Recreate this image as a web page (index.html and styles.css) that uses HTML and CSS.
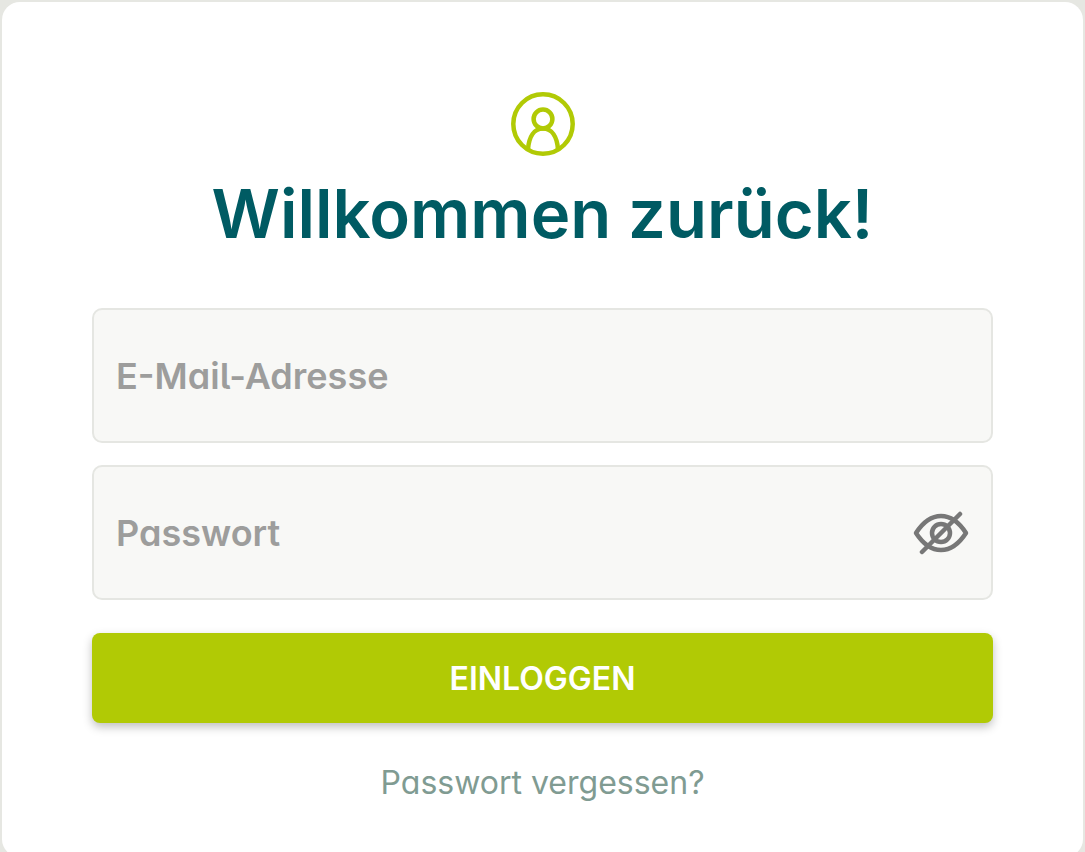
FILE: index.html
```html
<!DOCTYPE html>
<html lang="de">
<head>
  <meta charset="UTF-8">
  <meta name="viewport" content="width=device-width, initial-scale=1.0">
  <title>Login</title>
  <link rel="stylesheet" href="styles.css">
</head>
<body>
  <main class="card">
    <svg class="user-icon" viewBox="0 0 64 64" aria-hidden="true">
      <circle cx="32" cy="32" r="29.7"/>
      <circle cx="32" cy="27" r="9.4"/>
      <path d="M17 57C18 45 23 36.400 32 36.400S46 45 47 57"/>
    </svg>
    <h1>Willkommen zurück!</h1>

    <form class="login-form">
      <div class="field">
        <input type="email" id="email" placeholder="E-Mail-Adresse" aria-label="E-Mail-Adresse">
      </div>
      <div class="field">
        <input type="password" id="password" placeholder="Passwort" aria-label="Passwort">
        <button type="button" class="toggle" aria-label="Passwort anzeigen">
          <svg viewBox="0 0 56 44" aria-hidden="true">
            <path d="M3 22Q14 5 28 5T53 22Q42 39 28 39T3 22Z"/>
            <circle cx="28" cy="22" r="9"/>
            <path d="M9 41L47 3"/>
          </svg>
        </button>
      </div>
      <button type="submit" class="submit">EINLOGGEN</button>
    </form>

    <a class="forgot" href="#">Passwort vergessen?</a>
  </main>
</body>
</html>
```
FILE: styles.css
```css
* {
  box-sizing: border-box;
}

body {
  margin: 0;
  padding: 2px;
  background: #e6e7e2;
  font-family: Inter, "Liberation Sans", sans-serif;
  font-feature-settings: "cv11";
  overflow: hidden;
}

/* Card */
.card {
  display: flex;
  flex-direction: column;
  align-items: center;
  padding: 90px 90px 54px;
  background: #fff;
  border-radius: 18px;
}

.user-icon {
  width: 64px;
  height: 64px;
  fill: none;
  stroke: #b1ca05;
  stroke-width: 4.5;
}

h1 {
  margin: 16px 0 52px;
  font-size: 67px;
  line-height: 84px;
  font-weight: 600;
  color: #005b63;
}

/* Form */
.login-form {
  display: flex;
  flex-direction: column;
  width: 100%;
}

.field {
  display: flex;
  align-items: center;
  height: 135px;
  margin-bottom: 22px;
  padding: 0 22px;
  background: #f8f8f6;
  border: 2px solid #e5e6e2;
  border-radius: 10px;
}

.field input {
  flex: 1;
  min-width: 0;
  height: 100%;
  padding: 0;
  border: none;
  outline: none;
  background: none;
  font: inherit;
  font-size: 36px;
  font-weight: 600;
  font-feature-settings: "cv05", "cv11";
  color: #555;
}

.field input::placeholder {
  color: #9d9d9c;
  opacity: 1;
}

.toggle {
  padding: 0;
  border: none;
  background: none;
  cursor: pointer;
}

.toggle svg {
  display: block;
  width: 56px;
  height: 44px;
  fill: none;
  stroke: #777;
  stroke-width: 4.5;
  stroke-linecap: round;
  stroke-linejoin: round;
}

.submit {
  height: 90px;
  margin-top: 11px;
  border: none;
  border-radius: 8px;
  background: #b1ca05;
  box-shadow: 0 4px 10px rgba(0, 0, 0, 0.25);
  font: inherit;
  font-size: 32px;
  font-weight: 600;
  color: #fff;
  cursor: pointer;
}

.forgot {
  margin-top: 40px;
  font-size: 32px;
  line-height: 40px;
  color: #809b92;
  text-decoration: none;
}
```
